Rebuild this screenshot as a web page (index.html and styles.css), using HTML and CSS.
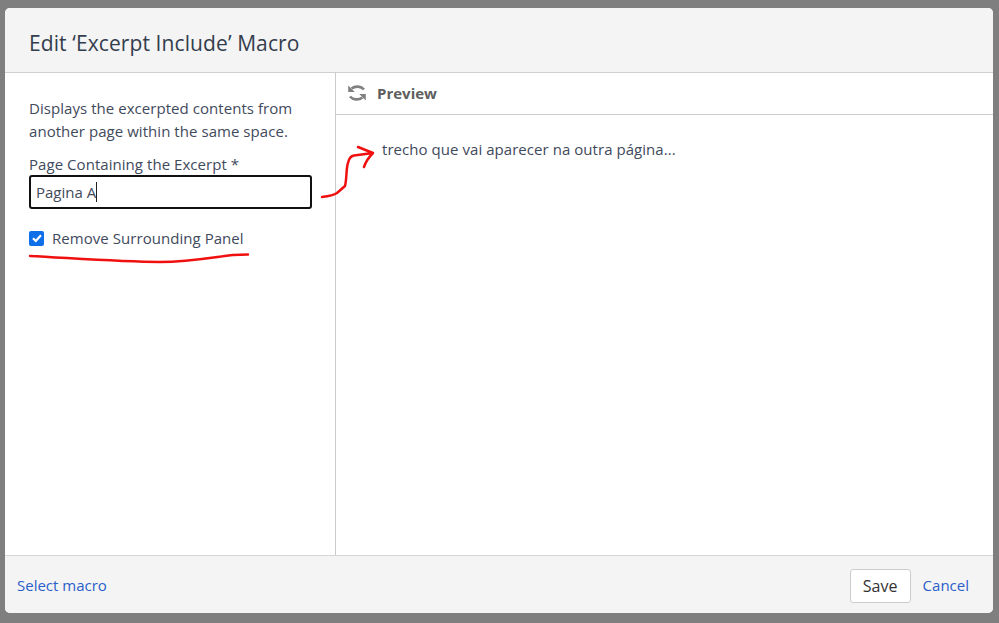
FILE: index.html
```html
<!DOCTYPE html>
<html lang="en">
<head>
<meta charset="utf-8">
<title>Edit Macro</title>
<link rel="stylesheet" href="styles.css">
</head>
<body>
<div class="dialog">
  <header class="head"><h1 class="title">Edit ‘Excerpt Include’ Macro</h1></header>
  <div class="main">
    <section class="side">
      <p class="desc">Displays the excerpted contents from another page within the same space.</p>
      <label class="label" for="page">Page Containing the Excerpt *</label>
      <div class="input" id="page"><span>Pagina A</span><i class="caret"></i></div>
      <div class="check-row"><span class="check"><svg viewBox="0 0 14 14" width="14" height="14"><path d="M3 7.2 L5.8 10 L11 4.2" fill="none" stroke="#fff" stroke-width="2.2"/></svg></span><span>Remove Surrounding Panel</span></div>
    </section>
    <section class="preview">
      <div class="preview-head">
        <svg class="refresh" viewBox="0 0 20 20" width="20" height="20"><path d="M17 6.500 A8 6.500 0 0 0 4.600 5.600 M3 13.500 A8 6.500 0 0 0 15.400 14.400" fill="none" stroke="#808080" stroke-width="2.600"/><path d="M1.200 2.400 L1.200 9 L7.800 9 Z M18.800 17.600 L18.800 11 L12.200 11 Z" fill="#808080"/></svg>
        <strong class="preview-title">Preview</strong>
      </div>
      <p class="excerpt">trecho que vai aparecer na outra página...</p>
    </section>
  </div>
  <footer class="foot">
    <a class="link" href="#">Select macro</a>
    <div class="actions"><button class="save" type="button">Save</button><a class="link" href="#">Cancel</a></div>
  </footer>
</div>
<svg class="ink" viewBox="0 0 999 623" width="999" height="623">
  <path d="M30 256 C70 258 120 262 160 262 C190 262 215 257 233 255 L248 254.500"/>
  <path d="M322 197 C330 196 334 195 337 193 L345 186 C347 178 346 168 348 163 C349 158 351 156 354 155.500 L373 153 L358 147 M373 153 C369 157 366 161 364 167"/>
</svg>
</body>
</html>
```
FILE: styles.css
```css
* { box-sizing: border-box; }
html, body { margin: 0; height: 100%; }
body {
  width: 999px;
  height: 623px;
  overflow: hidden;
  background: #7f7f7f;
  padding: 8px 6px 10px 5px;
  font-family: "Open Sans", "Noto Sans", sans-serif;
  font-size: 15px;
  letter-spacing: 0.05px;
  color: #3f4a5c;
}
.dialog {
  position: relative;
  height: 605px;
  display: flex;
  flex-direction: column;
  background: #fff;
  border-radius: 5px;
  overflow: hidden;
}
.head {
  height: 65px;
  flex: none;
  display: flex;
  align-items: center;
  padding: 6px 0 0 24px;
  background: #f4f4f4;
  border-bottom: 1px solid #d0d0d0;
}
.title { margin: 0; font-size: 21px; font-weight: 400; letter-spacing: 0.1px; color: #333d4d; }
.main { flex: 1; display: flex; min-height: 0; }
.side { width: 331px; flex: none; padding: 24px 0 0 24px; border-right: 1px solid #ccc; }
.desc { margin: 0; width: 290px; line-height: 23px; }
.label { display: block; margin-top: 11px; line-height: 20px; }
.input {
  display: flex;
  align-items: center;
  width: 283px;
  height: 34px;
  margin-top: 1px;
  padding-left: 5px;
  border: 2px solid #111;
  border-radius: 3px;
  letter-spacing: 0;
}
.caret { display: block; width: 1px; height: 20px; margin-left: 0; background: #222; }
.check-row { display: flex; align-items: center; gap: 8px; margin-top: 18px; line-height: 22px; }
.check {
  display: flex;
  width: 15px;
  height: 15px;
  align-items: center;
  justify-content: center;
  background: #0f6fe8;
  border-radius: 2px;
}
.preview { flex: 1; min-width: 0; }
.preview-head {
  height: 42px;
  display: flex;
  align-items: center;
  gap: 10px;
  padding-left: 11px;
  border-bottom: 1px solid #ccc;
  color: #5e5e5e;
}
.preview-title { font-size: 15px; font-weight: 700; letter-spacing: 0; margin-top: -2px; }
.refresh { flex: none; margin-top: -2px; }
.excerpt { margin: 23px 0 0 46px; line-height: 23px; }
.foot {
  height: 58px;
  flex: none;
  display: flex;
  align-items: center;
  justify-content: space-between;
  padding: 0 24px 0 12px;
  background: #f4f4f4;
  border-top: 1px solid #d6d6d6;
}
.link { color: #2a5fc9; text-decoration: none; font-size: 15px; letter-spacing: 0; }
.actions { display: flex; align-items: center; gap: 12px; }
.save {
  width: 61px;
  height: 34px;
  margin-top: 2px;
  padding: 0;
  background: #fff;
  border: 1px solid #ccc;
  border-radius: 3px;
  font: inherit;
  font-size: 16px;
  color: #333;
}
.ink {
  position: absolute;
  left: 0;
  top: 0;
  pointer-events: none;
}
.ink path { fill: none; stroke: #f01010; stroke-width: 2.5; stroke-linecap: round; stroke-linejoin: round; }
```
